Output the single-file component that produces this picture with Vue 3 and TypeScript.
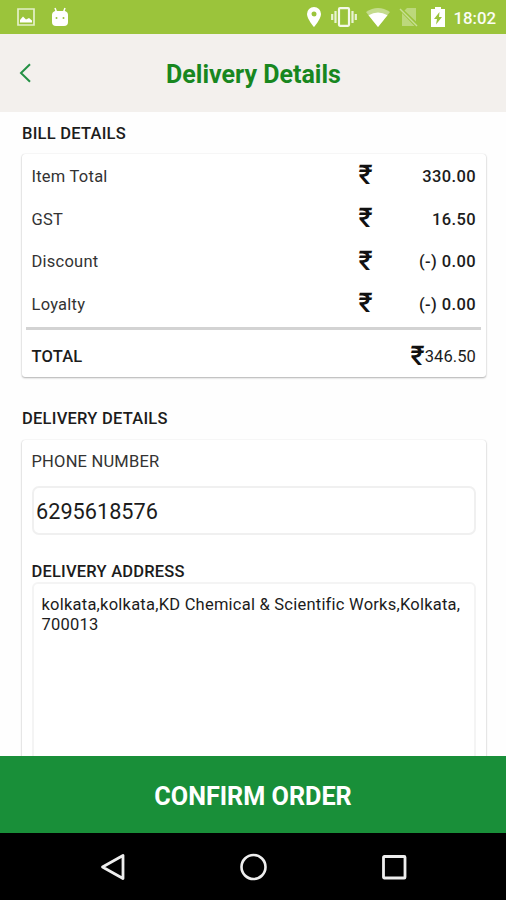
<script setup lang="ts">
interface BillRow {
  label: string
  amount: string
}

const billRows: BillRow[] = [
  { label: 'Item Total', amount: '330.00' },
  { label: 'GST', amount: '16.50' },
  { label: 'Discount', amount: '(-) 0.00' },
  { label: 'Loyalty', amount: '(-) 0.00' },
]
const total = '346.50'
const phone = '6295618576'
const address = 'kolkata,kolkata,KD Chemical & Scientific Works,Kolkata, 700013'
</script>

<template>
  <div class="screen">
    <div class="status">
      <svg class="picture" viewBox="0 0 18 18">
        <path d="M1 1h16v16H1z" fill="none" stroke="#e4f0c8" stroke-width="1.7" />
        <path d="M3 14.5v-2.500l3-3.500 3 3 3-1.500 3 2.500v2z" fill="#fff" />
      </svg>
      <svg class="android" viewBox="0 0 18 20">
        <path d="M4 1l1.500 4M14 1l-1.500 4" stroke="#fff" stroke-width="1.500" />
        <path d="M4 4h10q3 1 3 4v7q0 4-4 4H5q-4 0-4-4V8q0-3 3-4z" fill="#fff" />
        <circle cx="5.500" cy="11" r="1" fill="#98c33a" />
        <circle cx="12.500" cy="11" r="1" fill="#98c33a" />
      </svg>
      <span class="spacer"></span>
      <svg class="pin" viewBox="0 0 14 20">
        <path fill="#fff" fill-rule="evenodd" d="M7 0a7 7 0 0 0-7 7c0 5 7 13 7 13s7-8 7-13a7 7 0 0 0-7-7zm0 4.500a2.500 2.500 0 1 1 0 5 2.500 2.500 0 0 1 0-5z" />
      </svg>
      <svg class="vibrate" viewBox="0 0 26 20">
        <rect x="8" y="1.200" width="10" height="17.600" rx="1" fill="none" stroke="#f4f9e9" stroke-width="2.200" />
        <path d="M4.500 4v12M21.500 4v12M1.200 7v6M24.800 7v6" stroke="#e9f3d4" stroke-width="2.200" />
      </svg>
      <svg class="wifi" viewBox="0 0 24 19">
        <path fill="#c4dc8d" d="M0 4Q12-4 24 4L12 19z" />
        <path fill="#fff" d="M2.500 7.200Q12 2 21.500 7.200L12 19z" />
      </svg>
      <svg class="nosim" viewBox="0 0 20 20">
        <path d="M8 1h9v13.500L5.500 3.500zM3 6l12.500 13H3z" fill="#bcd87c" />
        <path d="M1 2l17 17" stroke="#c8df96" stroke-width="1.500" />
      </svg>
      <svg class="battery" viewBox="0 0 14 20">
        <path fill="#fff" fill-rule="evenodd" d="M4 0h6v2h4v18H0V2h4zM8.500 5L3 12h3l-1 5.500 6-7.500H8z" />
      </svg>
      <span class="clock">18:02</span>
    </div>

    <header class="bar">
      <svg class="back" viewBox="0 0 12 20">
        <path d="M11 1.200L2 10l9 8.800" fill="none" stroke="#239044" stroke-width="2" />
      </svg>
      <h1 class="title">Delivery Details</h1>
    </header>

    <main class="content">
      <h2 class="heading">BILL DETAILS</h2>
      <section class="card bill">
        <div v-for="row in billRows" :key="row.label" class="row">
          <span class="label">{{ row.label }}</span>
          <span class="rupee">₹</span>
          <span class="amount">{{ row.amount }}</span>
        </div>
        <div class="divider"></div>
        <div class="total">
          <span class="total-label">TOTAL</span>
          <span class="rupee">₹</span>
          <span class="total-amount">{{ total }}</span>
        </div>
      </section>

      <h2 class="heading second">DELIVERY DETAILS</h2>
      <section class="card delivery">
        <div class="phone-label">PHONE NUMBER</div>
        <div class="phone">{{ phone }}</div>
        <div class="address-label">DELIVERY ADDRESS</div>
        <div class="address">{{ address }}</div>
      </section>
    </main>

    <button class="confirm">CONFIRM ORDER</button>
    <nav class="nav">
      <svg viewBox="0 0 28 28"><path d="M3.500 14L24 2.500v23z" fill="none" stroke="#eee" stroke-width="2.800" stroke-linejoin="round" /></svg>
      <svg viewBox="0 0 28 28"><circle cx="14.500" cy="14" r="12" fill="none" stroke="#eee" stroke-width="2.600" /></svg>
      <svg viewBox="0 0 28 28"><rect x="3.500" y="3.500" width="21.500" height="21.500" rx=".8" fill="none" stroke="#eee" stroke-width="2.800" /></svg>
    </nav>
  </div>
</template>

<style>
body { margin: 0; }
</style>

<style scoped>
.screen {
  width: 506px;
  height: 900px;
  display: flex;
  flex-direction: column;
  overflow: hidden;
  background: #fefefe;
  color: #1c1c1c;
  font-family: Roboto, "Liberation Sans", sans-serif;
}
.status {
  height: 34px;
  flex: none;
  box-sizing: border-box;
  display: flex;
  align-items: center;
  padding: 0 9.500px 0 17px;
  background: #9bc43b;
}
.status svg { flex: none; }
.picture { width: 18px; height: 18px; }
.android { width: 18px; height: 20px; margin-left: 16px; }
.spacer { flex: 1; }
.pin { width: 14px; height: 20px; }
.vibrate { width: 26px; height: 20px; margin-left: 10px; }
.wifi { width: 24px; height: 19px; margin-left: 9px; }
.nosim { width: 20px; height: 20px; margin-left: 9px; }
.battery { width: 14px; height: 20px; margin-left: 12px; }
.clock {
  width: 43px;
  margin-left: 9px;
  color: #fbfdf6;
  font-size: 16.800px;
  font-weight: 500;
  line-height: 34px;
  padding-top: 2px;
  box-sizing: border-box;
  white-space: nowrap;
}
.bar {
  height: 78px;
  flex: none;
  box-sizing: border-box;
  display: flex;
  align-items: center;
  padding: 0 30px 0 19px;
  background: #f3f0ed;
}
.back { width: 12px; height: 20px; flex: none; }
.title {
  flex: 1;
  margin: 0;
  padding-top: 4px;
  text-align: center;
  color: #18871f;
  font-size: 25px;
  font-weight: 700;
  line-height: 30px;
}
.content {
  height: 644px;
  flex: none;
  box-sizing: border-box;
  padding: 12px 20px 0 22px;
  overflow: hidden;
}
.heading {
  margin: 0;
  height: 20px;
  font-size: 16.500px;
  font-weight: 500;
  letter-spacing: .24px;
  line-height: 20px;
  white-space: nowrap;
}
.card {
  box-sizing: border-box;
  background: #fff;
  border-radius: 3px;
  box-shadow: 0 1px 2px rgba(0, 0, 0, .3), 0 0 1px rgba(0, 0, 0, .16);
}
.bill { height: 223px; margin-top: 10px; padding-top: 1px; }
.row {
  height: 42.700px;
  display: grid;
  grid-template-columns: 327px 34px 1fr;
  align-items: center;
  padding: 0 10px 0 9.500px;
  font-size: 16.500px;
}
.label { color: #333; letter-spacing: .24px; }
.rupee { font-size: 27px; font-weight: 500; line-height: 26px; padding-bottom: 2px; color: #111; }
.amount { text-align: right; font-weight: 500; letter-spacing: .4px; }
.divider { height: 3px; margin: 1px 5px 0 4px; background: #d3d3d3; }
.total {
  height: 48px;
  display: flex;
  align-items: center;
  padding: 6px 10px 0 9.500px;
  box-sizing: border-box;
  font-size: 16.500px;
}
.total-label { flex: 1; font-weight: 500; letter-spacing: .2px; }
.total-amount { letter-spacing: .1px; }
.second { margin-top: 32px; }
.delivery { height: 400px; margin-top: 11px; padding: 12px 10px 0 9.500px; }
.phone-label { font-size: 16.500px; line-height: 20px; color: #333; letter-spacing: .2px; }
.phone {
  height: 49px;
  box-sizing: border-box;
  margin-top: 14px;
  padding-left: 2.500px;
  border: 2px solid #f0f0f0;
  border-radius: 7px;
  font-size: 21.700px;
  line-height: 47px;
}
.address-label { margin-top: 27px; font-size: 16.500px; font-weight: 500; line-height: 20px; letter-spacing: .2px; }
.address {
  height: 240px;
  box-sizing: border-box;
  padding: 11px 8px;
  border: 2px solid #f4f4f4;
  border-radius: 6px;
  font-size: 16.500px;
  letter-spacing: .23px;
  line-height: 19.500px;
}
.confirm {
  height: 77px;
  flex: none;
  padding: 3px 0 0;
  border: 0;
  background: #198f39;
  color: #fff;
  font-family: inherit;
  font-size: 25.200px;
  font-weight: 700;
}
.nav {
  height: 67px;
  flex: none;
  display: grid;
  grid-template-columns: repeat(3, 28px);
  justify-content: center;
  align-items: center;
  column-gap: 112.500px;
  background: #000;
}
.nav svg { width: 28px; height: 28px; }
</style>
